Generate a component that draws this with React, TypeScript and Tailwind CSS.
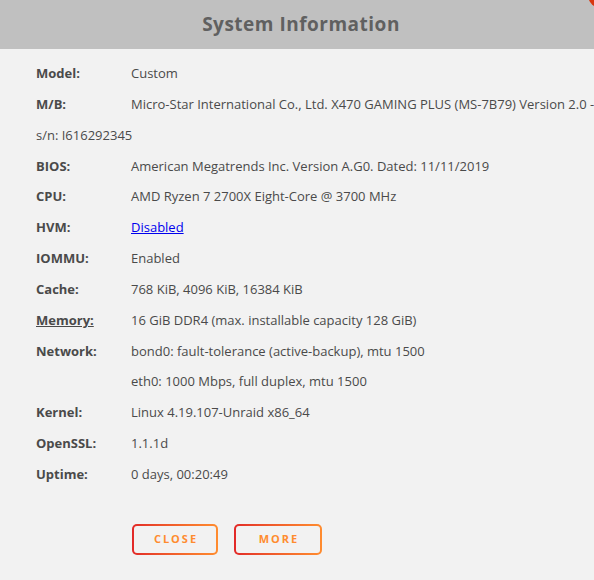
import * as React from "react";

type Row = { label: string; value: React.ReactNode; underline?: boolean };

const ROWS: Row[] = [
  { label: "Model:", value: "Custom" },
  { label: "BIOS:", value: "American Megatrends Inc. Version A.G0. Dated: 11/11/2019" },
  { label: "CPU:", value: "AMD Ryzen 7 2700X Eight-Core @ 3700 MHz" },
  {
    label: "HVM:",
    value: <a href="#" className="text-[#0000ee] underline">Disabled</a>,
  },
  { label: "IOMMU:", value: "Enabled" },
  { label: "Cache:", value: "768 KiB, 4096 KiB, 16384 KiB" },
  { label: "Memory:", value: "16 GiB DDR4 (max. installable capacity 128 GiB)", underline: true },
];

const ROWS2: Row[] = [
  { label: "Kernel:", value: "Linux 4.19.107-Unraid x86_64" },
  { label: "OpenSSL:", value: "1.1.1d" },
  { label: "Uptime:", value: "0 days, 00:20:49" },
];

function InfoRow({ row }: { row: Row }) {
  return (
    <div className="flex whitespace-nowrap">
      <span className={`w-[95px] shrink-0 font-bold ${row.underline ? "underline" : ""}`}>
        {row.label}
      </span>
      <span>{row.value}</span>
    </div>
  );
}

function GradientButton({ children, width }: { children: React.ReactNode; width: string }) {
  return (
    <button className={`rounded-[5px] bg-gradient-to-r from-[#e22828] to-[#ff8c2f] p-[2px] ${width}`}>
      <span className="flex h-[27px] items-center justify-center rounded-[3px] bg-[#f2f2f2] pl-[2px] text-[11px] font-bold tracking-[2px] text-[#ff8c2f]">
        {children}
      </span>
    </button>
  );
}

export default function App() {
  return (
    <div className="relative h-[580px] w-[594px] overflow-hidden bg-[#f2f2f2] font-['Open_Sans',sans-serif] text-[#4a4a4a]">
      {/* Header */}
      <div className="flex h-[49px] items-center justify-center bg-[#c0c0c0]">
        <h1 className="ml-[8px] text-[19px] font-bold tracking-[0.5px] text-[#606060]">System Information</h1>
      </div>
      <div className="absolute right-[-20px] top-[-18px] h-[26px] w-[26px] rounded-full bg-[#d8360f]" />

      {/* Content */}
      <div className="pl-[36px] pt-[9px] text-[13px] leading-[30.85px]">
        <InfoRow row={ROWS[0]} />
        <div className="flex whitespace-nowrap">
          <span className="w-[95px] shrink-0 font-bold">M/B:</span>
          <span>Micro-Star International Co., Ltd. X470 GAMING PLUS (MS-7B79) Version 2.0 -</span>
        </div>
        <div>s/n: I616292345</div>
        {ROWS.slice(1).map((r) => (
          <InfoRow key={r.label} row={r} />
        ))}
        <div className="flex whitespace-nowrap">
          <span className="w-[95px] shrink-0 font-bold">Network:</span>
          <div>
            <div>bond0: fault-tolerance (active-backup), mtu 1500</div>
            <div>eth0: 1000 Mbps, full duplex, mtu 1500</div>
          </div>
        </div>
        {ROWS2.map((r) => (
          <InfoRow key={r.label} row={r} />
        ))}

        <div className="mt-[34px] flex gap-[16px] pl-[96px]">
          <GradientButton width="w-[86px]">CLOSE</GradientButton>
          <GradientButton width="w-[88px]">MORE</GradientButton>
        </div>
      </div>
    </div>
  );
}
